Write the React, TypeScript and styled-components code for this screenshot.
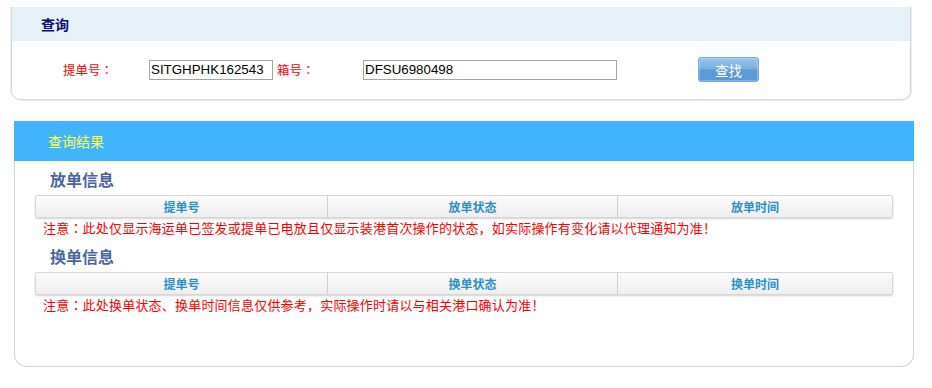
import React from "react";
import styled, { createGlobalStyle } from "styled-components";

const Global = createGlobalStyle`
  html, body { margin: 0; padding: 0; background: #ffffff; }
  body { font-family: "Liberation Sans", "Noto Sans CJK SC", sans-serif; }
  * { box-sizing: border-box; }
`;

const CJK = `"Liberation Sans", "Noto Sans CJK SC", sans-serif`;

const Page = styled.div`
  width: 932px;
  height: 388px;
  padding-top: 7px;
  display: flex;
  flex-direction: column;
`;

const QueryPanel = styled.section`
  margin-left: 11px;
  width: 900px;
  height: 93px;
  border: 1px solid #d6d6d6;
  border-top: none;
  border-radius: 0 0 9px 9px;
  box-shadow: 1px 1px 0 #eeeeee, -1px 0 0 #f2f2f2;
  display: flex;
  flex-direction: column;
  overflow: hidden;
`;

const QueryHeader = styled.div`
  height: 34px;
  margin: 0 -1px;
  background: #e5f0f7;
  display: flex;
  align-items: center;
  padding-left: 30px;
  font-family: ${CJK};
  font-size: 14px;
  font-weight: bold;
  color: #0c0c7a;
`;

const FormRow = styled.div`
  flex: 1;
  display: flex;
  align-items: center;
  padding-left: 51px;
  padding-bottom: 1px;
`;

const Label = styled.span<{ $w: number; $gap?: number }>`
  width: ${(p) => p.$w}px;
  margin-left: ${(p) => p.$gap ?? 0}px;
  font-family: ${CJK};
  font-size: 12.5px;
  color: #ff0000;
`;

const Colon = styled.span`
  font-family: "Noto Sans CJK TC", "Noto Sans CJK SC", sans-serif;
`;

const TextInput = styled.input<{ $w: number }>`
  width: ${(p) => p.$w}px;
  height: 20px;
  border: 1px solid #a5a5a5;
  padding: 0 1px;
  font-family: "Liberation Sans", Arial, sans-serif;
  font-size: 13.333px;
  color: #000;
  background: #fff;
  outline: none;
`;

const SearchButton = styled.button`
  margin-left: 81px;
  width: 61px;
  height: 25px;
  border: 1px solid #74a6f2;
  border-radius: 3px;
  background: linear-gradient(
    to bottom,
    #9dc5ea 0%,
    #79b0e0 45%,
    #5c9bd3 52%,
    #5a9ad4 100%
  );
  box-shadow: inset 0 0 0 1px rgba(255, 255, 255, 0.25);
  color: #ffffff;
  font-family: ${CJK};
  font-size: 13.5px;
  padding: 0;
  cursor: pointer;
`;

const ResultPanel = styled.section`
  margin-top: 21px;
  margin-left: 14px;
  width: 900px;
  height: 246px;
  border: 1px solid #d4d4d4;
  border-top: none;
  border-radius: 0 0 13px 13px;
  display: flex;
  flex-direction: column;
`;

const ResultHeader = styled.div`
  height: 40px;
  margin: 0 -1px;
  background: #42b4fe;
  display: flex;
  align-items: center;
  padding-left: 34px;
  font-family: ${CJK};
  font-size: 14px;
  color: #ffff4d;
`;

const ResultBody = styled.div`
  padding: 0 20px;
  display: flex;
  flex-direction: column;
`;

const SectionTitle = styled.h3`
  margin: 0;
  padding: 9px 0 3px 15px;
  line-height: 22px;
  font-family: ${CJK};
  font-size: 16px;
  font-weight: bold;
  color: #4c64a2;
`;

const TableHead = styled.div`
  height: 23px;
  display: grid;
  grid-template-columns: 291px 290px 1fr;
  border: 1px solid #d6d6d6;
  border-radius: 2px;
  background: linear-gradient(to bottom, #fbfbfb 0%, #f5f5f5 50%, #efefef 100%);
  box-shadow: 0 1px 2px rgba(0, 0, 0, 0.18);
`;

const HeadCell = styled.div`
  display: flex;
  align-items: center;
  justify-content: center;
  font-family: ${CJK};
  font-size: 12px;
  font-weight: bold;
  color: #2b90c8;
  & + & {
    border-left: 1px solid #d0d0d0;
  }
`;

const Notice = styled.p`
  margin: 1px 0 0;
  padding-left: 8px;
  line-height: 18px;
  font-family: ${CJK};
  font-size: 13px;
  letter-spacing: 0.2px;
  color: #ff0000;
  white-space: nowrap;
`;

const sections = [
  {
    title: "放单信息",
    cols: ["提单号", "放单状态", "放单时间"],
    note: "此处仅显示海运单已签发或提单已电放且仅显示装港首次操作的状态，如实际操作有变化请以代理通知为准！",
  },
  {
    title: "换单信息",
    cols: ["提单号", "换单状态", "换单时间"],
    note: "此处换单状态、换单时间信息仅供参考，实际操作时请以与相关港口确认为准！",
  },
];

export default function App() {
  return (
    <>
      <Global />
      <Page>
        <QueryPanel>
          <QueryHeader>查询</QueryHeader>
          <FormRow>
            <Label $w={86}>
              提单号<Colon>：</Colon>
            </Label>
            <TextInput $w={124} defaultValue="SITGHPHK162543" />
            <Label $w={86} $gap={4}>
              箱号<Colon>：</Colon>
            </Label>
            <TextInput $w={254} defaultValue="DFSU6980498" />
            <SearchButton type="button">查找</SearchButton>
          </FormRow>
        </QueryPanel>
        <ResultPanel>
          <ResultHeader>查询结果</ResultHeader>
          <ResultBody>
            {sections.map((s) => (
              <React.Fragment key={s.title}>
                <SectionTitle>{s.title}</SectionTitle>
                <TableHead>
                  {s.cols.map((c) => (
                    <HeadCell key={c}>{c}</HeadCell>
                  ))}
                </TableHead>
                <Notice>
                  注意<Colon>：</Colon>
                  {s.note}
                </Notice>
              </React.Fragment>
            ))}
          </ResultBody>
        </ResultPanel>
      </Page>
    </>
  );
}
